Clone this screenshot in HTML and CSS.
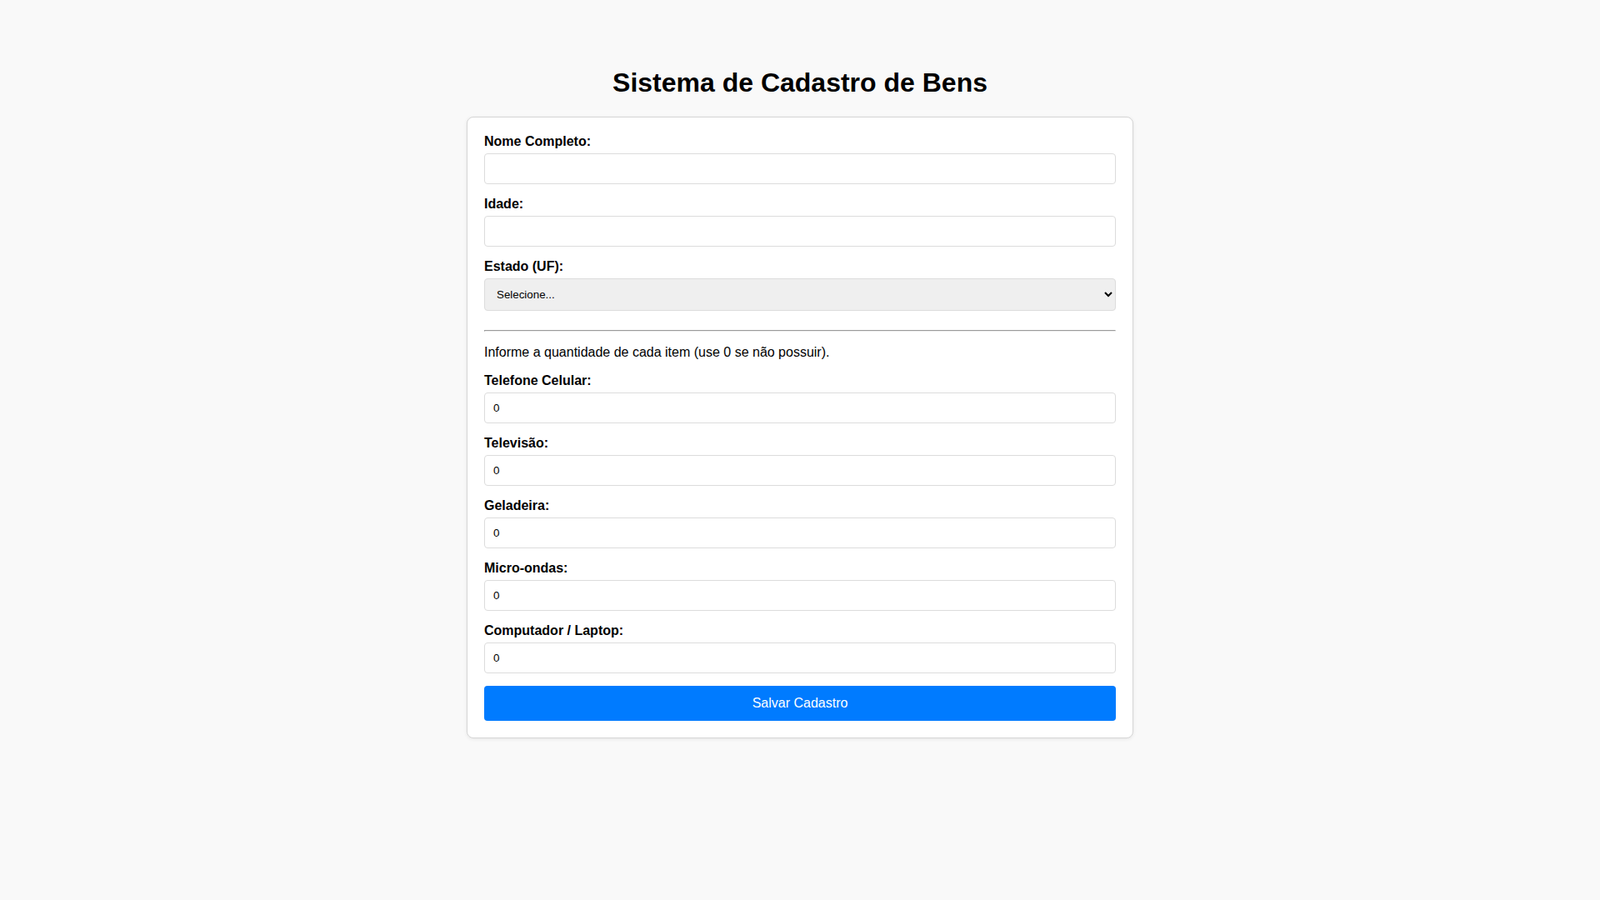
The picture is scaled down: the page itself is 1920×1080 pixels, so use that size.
FILE: index.html
```html
<!DOCTYPE html>
<html lang="pt-BR">
<head>
<meta charset="UTF-8">
<title>Sistema de Cadastro de Bens</title>
<link rel="stylesheet" href="styles.css">
</head>
<body>
<main class="page">
  <h1 class="title">Sistema de Cadastro de Bens</h1>
  <form class="card">
    <div class="group">
      <label class="label" for="nome">Nome Completo:</label>
      <input class="field" type="text" id="nome">
    </div>
    <div class="group">
      <label class="label" for="idade">Idade:</label>
      <input class="field" type="number" id="idade">
    </div>
    <div class="group">
      <label class="label" for="uf">Estado (UF):</label>
      <select class="field select" id="uf">
        <option>Selecione...</option>
      </select>
    </div>
    <hr class="divider">
    <p class="info">Informe a quantidade de cada item (use 0 se não possuir).</p>
    <div class="group">
      <label class="label" for="cel">Telefone Celular:</label>
      <input class="field" type="number" id="cel" value="0">
    </div>
    <div class="group">
      <label class="label" for="tv">Televisão:</label>
      <input class="field" type="number" id="tv" value="0">
    </div>
    <div class="group">
      <label class="label" for="gel">Geladeira:</label>
      <input class="field" type="number" id="gel" value="0">
    </div>
    <div class="group">
      <label class="label" for="micro">Micro-ondas:</label>
      <input class="field" type="number" id="micro" value="0">
    </div>
    <div class="group">
      <label class="label" for="pc">Computador / Laptop:</label>
      <input class="field" type="number" id="pc" value="0">
    </div>
    <button class="submit" type="button">Salvar Cadastro</button>
  </form>
</main>
</body>
</html>
```
FILE: styles.css
```css
html, body {
  margin: 0;
  padding: 0;
  background: #f9f9f9;
  font-family: "Liberation Sans", Arial, sans-serif;
  color: #000;
}

.page {
  padding: 81px 20px 40px;
}

.title {
  margin: 0 0 22px;
  font-size: 32px;
  font-weight: bold;
  text-align: center;
}

.card {
  box-sizing: border-box;
  width: 800px;
  margin: 0 auto;
  padding: 20px;
  background: #fff;
  border: 1px solid #d6d6d6;
  border-radius: 8px;
  box-shadow: 0 1px 4px rgba(0, 0, 0, 0.08);
}

.group {
  margin-bottom: 15px;
}

.label {
  display: block;
  margin-bottom: 5px;
  font-size: 16px;
  font-weight: bold;
}

.field {
  display: block;
  box-sizing: border-box;
  width: 100%;
  padding: 10px;
  border: 1px solid #dcdcdc;
  border-radius: 4px;
  font-family: "Liberation Sans", Arial, sans-serif;
  font-size: 13.333px;
  color: #000;
  background: #fff;
}

.select {
  background-color: #efefef;
}

.divider {
  margin: 23px 0 16px;
}

.info {
  margin: 16px 0;
  font-size: 16px;
}

.submit {
  display: block;
  width: 100%;
  margin-top: 15px;
  padding: 12px;
  border: none;
  border-radius: 4px;
  background: #007bff;
  color: #fff;
  font-family: "Liberation Sans", Arial, sans-serif;
  font-size: 16px;
  line-height: 18px;
}
```
